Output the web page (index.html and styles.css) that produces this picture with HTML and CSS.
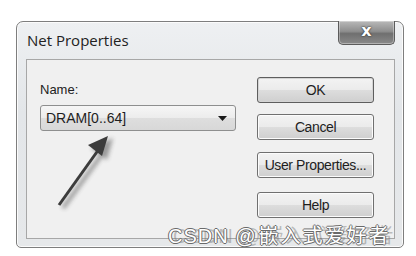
FILE: index.html
```html
<!DOCTYPE html>
<html>
<head>
<meta charset="utf-8">
<link rel="stylesheet" href="styles.css">
</head>
<body>
<div class="stage">
  <div class="window">
    <div class="titlebar">
      <span class="title">Net Properties</span>
      <div class="close"><span>x</span></div>
    </div>
    <div class="panel">
      <div class="left">
        <div class="label">Name:</div>
        <div class="combo">
          <span class="value">DRAM[0..64]</span>
          <svg class="caret" width="9" height="5" viewBox="0 0 9 5"><path d="M0 0 H9 L4.5 5 Z" fill="#1a1a1a"/></svg>
        </div>
      </div>
      <div class="buttons">
        <div class="btn default">OK</div>
        <div class="btn">Cancel</div>
        <div class="btn user">User Properties...</div>
        <div class="btn help">Help</div>
      </div>
      <svg class="arrow" width="110" height="100" viewBox="0 0 110 100">
        <defs>
          <filter id="sh" x="-30%" y="-30%" width="160%" height="160%">
            <feGaussianBlur stdDeviation="2"/>
          </filter>
        </defs>
        <g transform="translate(4,3)" filter="url(#sh)" opacity="0.45">
          <line x1="8" y1="86" x2="50" y2="28" stroke="#333" stroke-width="4"/>
          <path d="M58 16 L36 26 L52 38 Z" fill="#333"/>
        </g>
        <line x1="8" y1="86" x2="48" y2="30" stroke="#3c3c3c" stroke-width="3"/>
        <path d="M57 17 L37 26 L51 37 Z" fill="#3c3c3c"/>
      </svg>
      <div class="mark"><span class="latin">CSDN @</span><span class="cjk">嵌入式爱好者</span></div>
    </div>
  </div>
</div>
</body>
</html>
```
FILE: styles.css
```css
html, body {
  margin: 0;
  padding: 0;
  background: #ffffff;
}
.stage {
  width: 416px;
  height: 256px;
  padding: 21px 0 0 16px;
  box-sizing: border-box;
}
.window {
  width: 388px;
  height: 227px;
  box-sizing: border-box;
  border: 1px solid #7e7e7e;
  border-radius: 7px 7px 5px 5px;
  background: linear-gradient(#eef0f2, #e3e6e9 40%, #e6e8ea);
  box-shadow: inset 0 0 0 1px #fbfbfb;
  display: flex;
  flex-direction: column;
}
.titlebar {
  height: 37px;
  display: flex;
  align-items: flex-start;
  justify-content: space-between;
  padding: 0 8px 0 10px;
}
.title {
  font-family: "Open Sans", "DejaVu Sans", sans-serif;
  font-size: 15px;
  color: #222;
  margin-top: 8px;
}
.close {
  width: 57px;
  height: 24px;
  margin-top: -1px;
  box-sizing: border-box;
  border: 1px solid #5b5b5b;
  border-top: none;
  border-radius: 0 0 5px 5px;
  background: linear-gradient(#b9b9b9, #8e8e8e 45%, #6f6f6f 55%, #8a8a8a);
  display: flex;
  align-items: center;
  justify-content: center;
  box-shadow: inset 0 0 0 1px rgba(255,255,255,0.35);
}
.close span {
  font-family: "DejaVu Sans", sans-serif;
  font-weight: bold;
  font-size: 16px;
  line-height: 16px;
  color: #fff;
  text-shadow: 0 0 2px #333, 0 0 1px #333;
  margin-top: -3px;
}
.panel {
  position: relative;
  margin: 0 8px 8px 9px;
  flex: 1;
  border: 1px solid #a7a7a7;
  background: #f0f0f0;
  display: flex;
  padding: 17px 20px 0 13px;
}
.left {
  flex: 1;
  display: flex;
  flex-direction: column;
}
.label {
  font-family: "Liberation Sans", Arial, sans-serif;
  font-size: 13px;
  color: #222;
  margin-top: 5px;
  line-height: 15px;
}
.combo {
  margin-top: 8px;
  width: 196px;
  height: 26px;
  box-sizing: border-box;
  border: 1px solid #8e8f8f;
  border-radius: 3px;
  background: linear-gradient(#f6f6f6, #ececec 50%, #dedede 51%, #d8d8d8);
  display: flex;
  align-items: center;
  justify-content: space-between;
  padding: 0 8px 0 5px;
}
.value {
  font-family: "Liberation Sans", Arial, sans-serif;
  font-size: 14px;
  color: #1e1e1e;
}
.buttons {
  width: 117px;
  display: flex;
  flex-direction: column;
  gap: 11px;
}
.btn {
  height: 26px;
  box-sizing: border-box;
  border: 1px solid #707070;
  border-radius: 3px;
  background: linear-gradient(#f3f3f3, #ebebeb 50%, #dddddd 51%, #cfcfcf);
  box-shadow: inset 0 0 0 1px #fcfcfc;
  display: flex;
  align-items: center;
  justify-content: center;
  font-family: "Liberation Sans", Arial, sans-serif;
  font-size: 14px;
  letter-spacing: -0.4px;
  color: #1e1e1e;
}
.btn.default {
  border-color: #5e5e5e;
  box-shadow: inset 0 0 0 1px #d4d4d4;
}
.btn.user {
  margin-top: 1px;
}
.btn.help {
  margin-top: 3px;
}
.arrow {
  position: absolute;
  left: 24px;
  top: 59px;
}
.mark {
  position: absolute;
  left: 141px;
  top: 164px;
  white-space: nowrap;
  font-family: "Liberation Sans", "Noto Sans CJK SC", sans-serif;
  font-size: 20px;
  line-height: 22px;
  color: #ffffff;
  text-shadow:
    1px 0 0 #6a6a6a, -1px 0 0 #6a6a6a, 0 1px 0 #6a6a6a, 0 -1px 0 #6a6a6a,
    5px 0 0 rgba(120,120,120,0.45);
}
.mark .latin {
  letter-spacing: 1px;
  margin-right: 2px;
}
.mark .cjk {
  font-family: "Noto Sans CJK SC", sans-serif;
  letter-spacing: 2px;
}
```
